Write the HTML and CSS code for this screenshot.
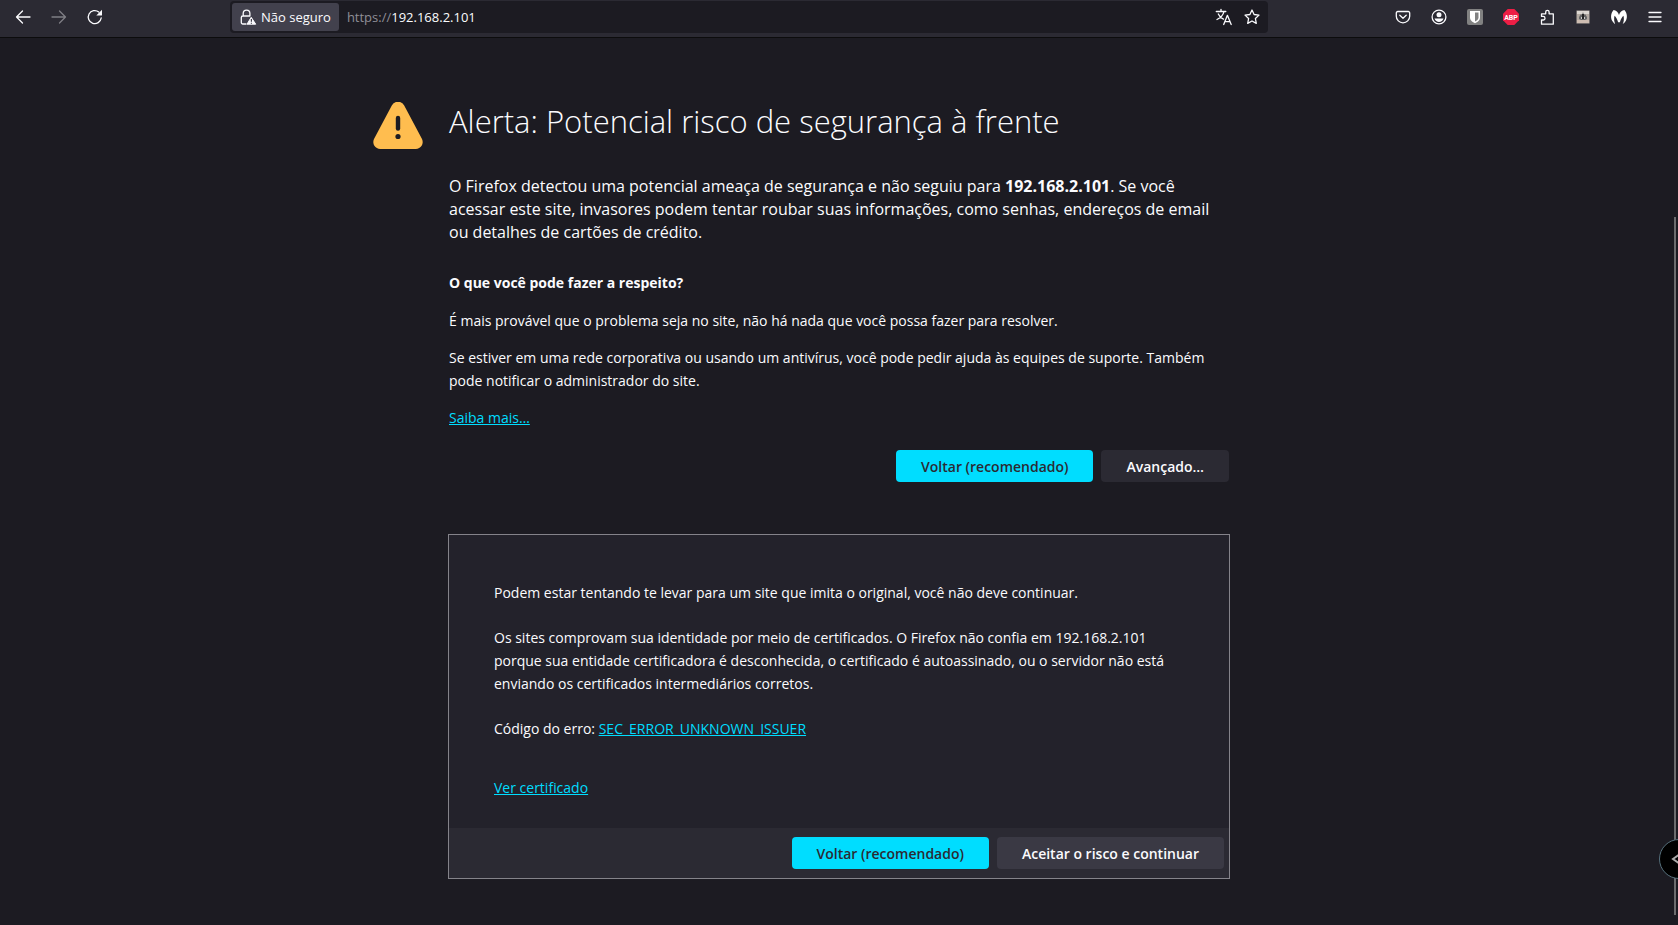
FILE: index.html
```html
<!DOCTYPE html>
<html lang="pt-BR">
<head>
<meta charset="utf-8">
<title>Alerta: Potencial risco de segurança à frente</title>
<link rel="stylesheet" href="styles.css">
</head>
<body>
<header class="toolbar">
  <nav class="tools" aria-label="Navegação">
    <button class="tool" aria-label="Voltar"><svg class="icon" viewBox="0 0 16 16"><path class="line" d="M15 8H1.500M7.500 2 1.500 8l6 6"/></svg></button>
    <button class="tool" aria-label="Avançar" disabled><svg class="icon" viewBox="0 0 16 16"><path class="line" d="M1 8h13.500M8.500 2l6 6-6 6"/></svg></button>
    <button class="tool" aria-label="Recarregar"><svg class="icon" viewBox="0 0 16 16"><path class="line" d="M14.200 9A6.500 6.500 0 1 1 11.800 3"/><path d="M15 .8V6a.6.6 0 0 1-.6.6H9.300z" fill="currentColor"/></svg></button>
  </nav>
  <div class="urlbar">
    <button class="identity">
      <svg class="icon" viewBox="0 0 16 16"><path class="line" d="M3.200 7V4.500a3.200 3.200 0 0 1 6.700 0V7M6 15H2.800a1.500 1.500 0 0 1-1.500-1.500v-5A1.500 1.500 0 0 1 2.800 7h7"/><path d="M11.200 8.300 15.700 15.200H7z" fill="currentColor" stroke="currentColor" stroke-linejoin="round"/><path d="M11.400 10v2.800M11.400 13.700v1.100" stroke="#42414d" stroke-width="1.200"/></svg>
      <span>Não seguro</span>
    </button>
    <label class="scheme" for="address">https://</label>
    <input class="address" id="address" type="text" value="192.168.2.101">
    <button class="action" aria-label="Traduzir página"><svg class="icon" viewBox="0 0 16 16"><path class="line" d="M.3 2.500h9.500M5 .3v2M8 2.700C7 6.500 4.500 9 1 10.500M2.300 5c1.200 2.600 3 4.300 5.200 5.200M7.700 15.500l3.700-9.200 3.800 9.200M9 12.600h5"/></svg></button>
    <button class="action" aria-label="Adicionar aos favoritos"><svg class="icon" viewBox="0 0 16 16"><path class="line" d="M8 1l2.100 4.500 4.900.6-3.600 3.400.9 4.900L8 12l-4.300 2.400.9-4.900L1 6.100l4.900-.6z"/></svg></button>
  </div>
  <div class="tools">
    <button class="tool" aria-label="Pocket"><svg class="icon" viewBox="0 0 16 16"><path class="line" d="M2.800 2.500h10.400a1.500 1.500 0 0 1 1.500 1.500v3.300a6.700 6.500 0 0 1-13.400 0V4a1.500 1.500 0 0 1 1.500-1.500z"/><path class="line" d="M4.800 6.200 8 9.200l3.200-3"/></svg></button>
    <button class="tool" aria-label="Conta"><svg class="icon" viewBox="0 0 16 16"><circle class="line" cx="8" cy="8" r="6.900"/><circle cx="8" cy="5.800" r="2.500" fill="currentColor"/><path d="M3.500 9.500h9c-.6 2.200-2.500 3.400-4.500 3.400s-3.900-1.200-4.500-3.400z" fill="currentColor"/></svg></button>
    <button class="tool" aria-label="Bitwarden"><svg class="icon" viewBox="0 0 16 16"><rect width="16" height="16" rx="2" fill="#818181"/><path d="M3 2h10v6.500c0 3-2.500 4.600-5 5.700-2.500-1.100-5-2.700-5-5.700z" fill="#fff"/><path d="M8 3.600h3.500v4.900c0 2-1.600 3.100-3.500 4z" fill="#818181"/></svg></button>
    <button class="tool" aria-label="Adblock Plus"><svg class="icon" viewBox="0 0 16 16"><path d="M4.700 0h6.600L16 4.700v6.600L11.300 16H4.700L0 11.300V4.700z" fill="#ed1e45"/><text class="abp" x="8" y="11" text-anchor="middle">ABP</text></svg></button>
    <button class="tool" aria-label="Extensões"><svg class="icon" viewBox="0 0 16 16"><path class="line" d="M2.500 15.200V11h1.700a1.800 1.800 0 0 0 0-3.600H2.500V4.800h4.200V3a1.700 1.700 0 0 1 3.400 0v1.800h4.200v10.400z"/></svg></button>
    <button class="tool" aria-label="Extensão de fotos"><svg class="icon" viewBox="0 0 16 16"><rect x="1.500" y="1.500" width="13" height="13" fill="#b3aaa2"/><path d="M2 2h12v3H2z" fill="#dcd7d1"/><path d="M2 11h12v3H2z" fill="#cdbcb1"/><path d="M4 10V8l2-3 1 1 1-3 1 3 1-1 2 3v2l-2 1H6z" fill="#666"/><path d="M6 8h1v2H6zM9 8h1v2H9z" fill="#ccc"/><path d="M7 5h2v5H7z" fill="#252525"/></svg></button>
    <button class="tool" aria-label="Malwarebytes"><svg class="icon" viewBox="0 0 16 16"><path d="M2.600 1C5 1.300 7.200 3.300 8 6c.8-2.700 3-4.700 5.400-5 2.800 3.200 3.300 7.700 1.300 11-.7 1.200-1.700 2.200-3 2.900 1.200-2.200 1.500-5 .8-8.200-1.400 1.100-2.700 3.300-3.600 6.600H7.100C6.200 10 4.900 7.800 3.500 6.700c-.7 3.200-.4 6 .8 8.200-1.300-.7-2.300-1.700-3-2.900C-.7 8.700-.2 4.200 2.600 1z" fill="#fff"/></svg></button>
    <button class="tool" aria-label="Menu"><svg class="icon" viewBox="0 0 16 16"><path class="line" d="M2 3.500h12M2 8h12M2 12.500h12"/></svg></button>
  </div>
</header>

<main class="page">
  <svg class="warning" viewBox="0 0 50 47" aria-hidden="true"><path d="M18.800 3.500a7 7 0 0 1 12.400 0L49 37a7 7 0 0 1-6.200 10H7.200A7 7 0 0 1 1 37z" fill="#ffbd4f"/><path d="M25 16v10.500" stroke="#1c1b22" stroke-width="4.400" stroke-linecap="round"/><circle cx="25" cy="34.500" r="2.600" fill="#1c1b22"/></svg>
  <div class="content">
    <div class="message">
      <h1 class="title">Alerta: Potencial risco de segurança à frente</h1>
      <p class="intro">O Firefox detectou uma potencial ameaça de segurança e não seguiu para <b>192.168.2.101</b>. Se você acessar este site, invasores podem tentar roubar suas informações, como senhas, endereços de email ou detalhes de cartões de crédito.</p>
      <h2 class="subtitle">O que você pode fazer a respeito?</h2>
      <p class="text">É mais provável que o problema seja no site, não há nada que você possa fazer para resolver.</p>
      <p class="text">Se estiver em uma rede corporativa ou usando um antivírus, você pode pedir ajuda às equipes de suporte. Também pode notificar o administrador do site.</p>
      <p class="text"><a class="link" href="#saiba-mais">Saiba mais…</a></p>
      <div class="buttons">
        <button class="button primary">Voltar (recomendado)</button>
        <button class="button">Avançado…</button>
      </div>
    </div>
    <section class="panel">
      <div class="details">
        <p>Podem estar tentando te levar para um site que imita o original, você não deve continuar.</p>
        <p>Os sites comprovam sua identidade por meio de certificados. O Firefox não confia em 192.168.2.101 porque sua entidade certificadora é desconhecida, o certificado é autoassinado, ou o servidor não está enviando os certificados intermediários corretos.</p>
        <p>Código do erro: <a class="link" href="#erro">SEC_ERROR_UNKNOWN_ISSUER</a></p>
        <p class="certificate"><a class="link" href="#certificado">Ver certificado</a></p>
      </div>
      <div class="buttons footer">
        <button class="button primary">Voltar (recomendado)</button>
        <button class="button raised">Aceitar o risco e continuar</button>
      </div>
    </section>
  </div>
</main>
<div class="scrollbar"></div>
<button class="drawer" aria-label="Abrir painel"><svg class="icon" viewBox="0 0 16 16"><path d="M10 3 3 8l7 5" fill="none" stroke="#aaa" stroke-width="2"/></svg></button>
</body>
</html>
```
FILE: styles.css
```css
* { box-sizing: border-box; }

body {
  margin: 0;
  min-height: 100vh;
  background: #1c1b22;
  color: #fbfbfe;
  font: 14px/23px "Segoe UI", "Open Sans", sans-serif;
  overflow: hidden;
}

button, input { font: inherit; color: inherit; }
button { border: 0; background: none; padding: 0; }
h1, h2, p { margin: 0; }

.icon { display: block; width: 16px; height: 16px; overflow: visible; }
.line { fill: none; stroke: currentColor; stroke-width: 1.3; stroke-linecap: round; stroke-linejoin: round; }
.abp { font: 700 7px Roboto, sans-serif; fill: #fff; }

.toolbar {
  display: grid;
  grid-template-columns: auto 1fr auto;
  gap: 117px;
  height: 38px;
  padding: 1px 5px 4px;
  background: #2b2a33;
  border-bottom: 1px solid #0c0c0d;
}
.tools { display: flex; }
.tool { display: grid; place-items: center; width: 36px; }
.tool:disabled { opacity: .4; }

.urlbar {
  display: flex;
  align-items: center;
  min-width: 0;
  padding: 2px;
  background: #1c1b22;
  border-radius: 4px;
  font-size: 13px;
}
.identity {
  display: flex;
  align-items: center;
  gap: 5px;
  height: 28px;
  padding: 0 8px;
  border-radius: 3px;
  background: #42414d;
}
.scheme { margin-left: 8px; color: #8f8e96; }
.address { flex: 1; min-width: 0; padding: 0; border: 0; background: none; outline: 0; }
.action { display: grid; place-items: center; width: 28px; height: 28px; }

.page {
  display: grid;
  grid-template-columns: 75px minmax(0, 782px) 75px;
  justify-content: center;
  padding-top: 64px;
}
.warning { width: 50px; height: 47px; }
.content { grid-column: 2; }
.message { padding: 0 1px; }

.title { font-size: 31px; font-weight: 300; line-height: 38px; }
.intro { margin-top: 35px; font-size: 16px; }
.subtitle { margin-top: 27px; font-size: 14px; font-weight: 700; }
.text { margin-top: 15px; }
.text + .text { margin-top: 14px; }
.link { color: #00ddff; text-decoration: underline; }

.buttons { display: flex; justify-content: flex-end; gap: 8px; margin-top: 21px; }
.button {
  height: 32px;
  padding: 0 25px;
  border-radius: 4px;
  background: #2b2a33;
  font-weight: 600;
}
.primary { background: #00ddff; color: #2b2a33; }
.raised { background: #3a3944; }

.panel { margin-top: 52px; border: 1px solid #84838a; background: #23222b; }
.details { display: grid; gap: 22px; padding: 46px 45px 29px; }
.certificate { margin-top: 14px; }
.footer { margin: 0; padding: 9px 5px; background: #2b2a33; }

.scrollbar {
  position: fixed;
  top: 217px;
  right: 2px;
  bottom: 10px;
  width: 2px;
  background: #6c6c6e;
}
.drawer {
  position: fixed;
  right: -21px;
  bottom: 46px;
  display: grid;
  align-items: center;
  width: 40px;
  height: 40px;
  padding-left: 10px;
  border: 1px solid #56707c;
  border-radius: 50%;
  background: #000;
}
```
